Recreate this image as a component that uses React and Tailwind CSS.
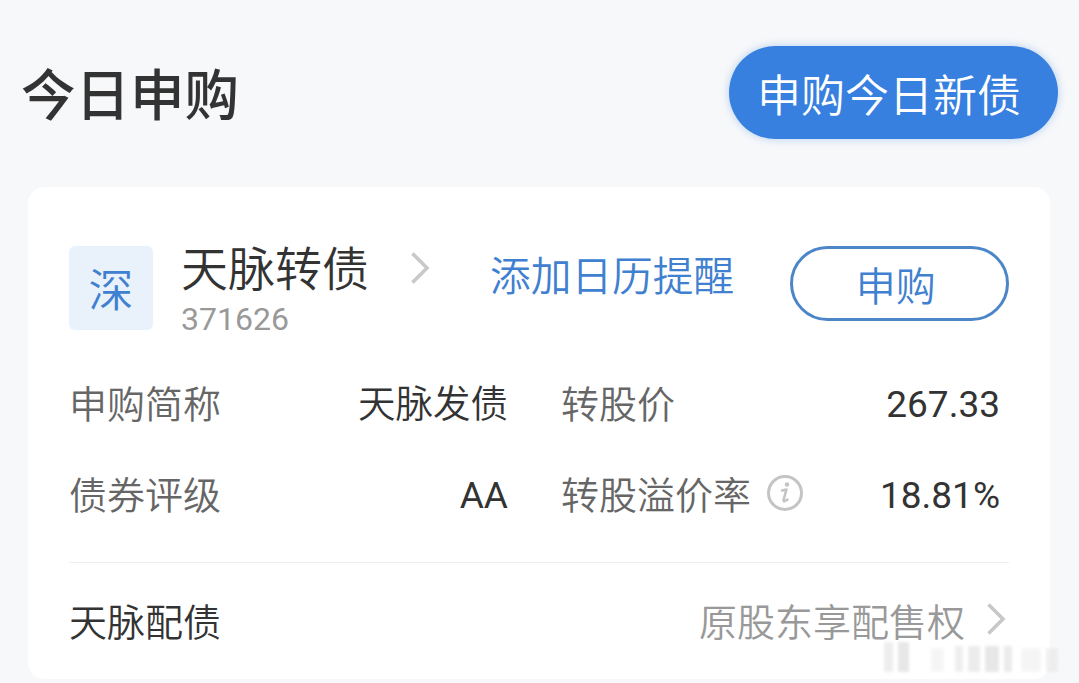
const cjk = { fontFamily: '"Noto Sans CJK SC", sans-serif' }
const latin = { fontFamily: 'Roboto, sans-serif' }

function Row({ label, value, icon, text }) {
  return (
    <div className="flex items-center justify-between h-[91px]">
      <div className="flex items-center gap-[15px] text-[38px] font-[350] text-[#666666]">
        {label}
        {icon}
      </div>
      {text ? (
        <div className="pl-[1px] text-[37.5px] font-[350] text-[#333333]">{value}</div>
      ) : (
        <div className="pt-[6px] text-[37px] text-[#333333]" style={latin}>{value}</div>
      )}
    </div>
  )
}

function InfoIcon() {
  return (
    <svg width="38" height="38" viewBox="0 0 38 38" fill="none">
      <circle cx="19" cy="19" r="16.5" stroke="#c4c4c4" strokeWidth="3" />
      <circle cx="21" cy="10.5" r="2.2" fill="#c4c4c4" />
      <path d="M16 16.5 L20.5 15.5 L17.5 26 Q17.3 27.8 19 27 L21.5 25.5" stroke="#c4c4c4" strokeWidth="2.6" strokeLinecap="round" strokeLinejoin="round" />
    </svg>
  )
}

function Chevron({ className }) {
  return (
    <svg className={className} width="20" height="34" viewBox="0 0 20 34" fill="none">
      <path d="M2.5 2.5 L17 17 L2.5 31.5" stroke="#c8c8c8" strokeWidth="3.6" />
    </svg>
  )
}

export default function App() {
  return (
    <div style={cjk} className="relative h-[683px] w-[1079px] overflow-hidden bg-[#f7f8fa]">
      <header className="flex items-center justify-between pt-[46px] pl-[21px] pr-[21px]">
        <h1 className="text-[54.5px] font-medium leading-none text-[#333333]">今日申购</h1>
        <button className="flex h-[93px] w-[329px] items-center justify-center rounded-full bg-[#3780e0] pr-[9px] text-[44px] font-[350] text-white shadow-[0_0_8px_rgba(55,128,224,0.35)]">
          申购今日新债
        </button>
      </header>

      <section className="mx-[28px] mt-[48px] h-[492px] w-[1022px] rounded-[16px] bg-white pl-[41px] pr-[41px] pt-[59px]">
        <div className="flex items-start">
          <div className="flex h-[84px] w-[84px] shrink-0 items-center justify-center rounded-[6px] bg-[#e9f2fb] text-[45px] font-[350] text-[#3f80d0]">
            深
          </div>
          <div className="ml-[28px] w-[188px] shrink-0">
            <div className="-mt-[3px] text-[47px] font-[350] leading-[46px] text-[#333333] whitespace-nowrap">天脉转债</div>
            <div className="mt-[11px] text-[32px] leading-[38px] text-[#999999]" style={latin}>371626</div>
          </div>
          <Chevron className="ml-[41px] mt-[5px] shrink-0" />
          <div className="ml-[60px] mt-[3px] text-[40.7px] font-[350] leading-[50px] text-[#3f80d0] whitespace-nowrap">添加日历提醒</div>
          <button className="ml-[56px] flex h-[75px] w-[219px] shrink-0 items-center justify-center rounded-full border-[3px] border-[#4c86c9] pr-[8px] text-[40px] font-[350] text-[#3f80d0]">
            申购
          </button>
        </div>

        <div className="mt-[18px] grid grid-cols-[439px_439px] gap-x-[53px]">
          <Row label="申购简称" value="天脉发债" text />
          <Row label="转股价" value="267.33" />
          <Row label="债券评级" value="AA" />
          <Row label="转股溢价率" value="18.81%" icon={<InfoIcon />} />
        </div>

        <div className="mt-[24px] h-px bg-[#eeeeee]" />

        <div className="flex h-[112px] items-center justify-between">
          <div className="text-[38px] font-[350] text-[#333333]">天脉配债</div>
          <div className="flex items-center text-[38px] font-[350] text-[#999999]">
            原股东享配售权
            <Chevron className="ml-[21px] mr-[3px]" />
          </div>
        </div>
      </section>

      {/* watermark */}
      <div className="absolute left-[884px] top-[642px] flex h-[30px] items-end gap-[5px] opacity-60 blur-[1.5px]">
        <div className="h-[30px] w-[9px] bg-[#e2e2e2]" />
        <div className="h-[30px] w-[11px] bg-[#d8d8d8]" />
        <div className="ml-[17px] h-[24px] w-[13px] bg-[#f0f0f0]" />
        <div className="ml-[6px] h-[26px] w-[8px] bg-[#e4e4e4]" />
        <div className="h-[26px] w-[12px] bg-[#e0e0e0]" />
        <div className="h-[26px] w-[14px] bg-[#d8d8d8]" />
        <div className="h-[26px] w-[8px] bg-[#dedede]" />
        <div className="ml-[4px] h-[24px] w-[20px] bg-[#f0f0f0]" />
        <div className="h-[24px] w-[12px] bg-[#e6e6e6]" />
      </div>
    </div>
  )
}
